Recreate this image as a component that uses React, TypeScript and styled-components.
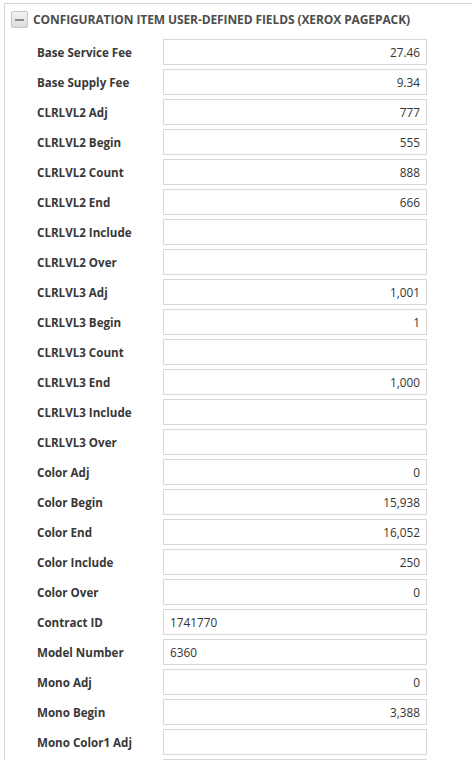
import styled, { createGlobalStyle } from 'styled-components';

const GlobalStyle = createGlobalStyle`
  html, body {
    margin: 0;
    padding: 0;
    background: #ffffff;
    overflow: hidden;
  }
  body {
    font-family: "Open Sans", "Liberation Sans", sans-serif;
  }
`

const Page = styled.div`
  width: 472px;
  height: 760px;
  overflow: hidden;
  padding: 3px 0 0 4px;
  box-sizing: border-box;
`

const Panel = styled.section`
  border-top: 1px solid #d6d6d6;
  border-left: 1px solid #d6d6d6;
`

const Header = styled.header`
  display: flex;
  align-items: center;
  gap: 5px;
  height: 31px;
  padding: 0 0 4px 6px;
`

const ToggleBox = styled.div`
  box-sizing: border-box;
  width: 17px;
  height: 17px;
  border: 1px solid #c4c4c4;
  border-radius: 2px;
  background: linear-gradient(#f4f4f4, #dcdcdc);
  display: flex;
  align-items: center;
  justify-content: center;
`

const Minus = styled.span`
  width: 9px;
  height: 2px;
  background: #8a8a8a;
`

const Title = styled.h3`
  margin: 0;
  font-size: 12px;
  font-weight: 700;
  color: #4d4d4d;
  letter-spacing: -0.1px;
  white-space: nowrap;
`

const Fields = styled.div`
  display: grid;
  grid-template-columns: 126px 264px;
  grid-auto-rows: 26px;
  row-gap: 4px;
  padding-left: 32px;
`

const Label = styled.label`
  display: flex;
  align-items: center;
  font-size: 11.6px;
  font-weight: 700;
  color: #383838;
  white-space: nowrap;
`

const Input = styled.input<{ $align: 'left' | 'right' }>`
  box-sizing: border-box;
  width: 100%;
  height: 26px;
  margin: 0;
  border: 1px solid #d8d8d8;
  padding: 0 6px;
  font-family: "Open Sans", "Liberation Sans", sans-serif;
  font-size: 11.8px;
  color: #333333;
  background: #ffffff;
  text-align: ${(props) => props.$align};
  outline: none;
`

const rows: [string, string, ('left' | 'right')?][] = [
  ['Base Service Fee', '27.46'],
  ['Base Supply Fee', '9.34'],
  ['CLRLVL2 Adj', '777'],
  ['CLRLVL2 Begin', '555'],
  ['CLRLVL2 Count', '888'],
  ['CLRLVL2 End', '666'],
  ['CLRLVL2 Include', ''],
  ['CLRLVL2 Over', ''],
  ['CLRLVL3 Adj', '1,001'],
  ['CLRLVL3 Begin', '1'],
  ['CLRLVL3 Count', ''],
  ['CLRLVL3 End', '1,000'],
  ['CLRLVL3 Include', ''],
  ['CLRLVL3 Over', ''],
  ['Color Adj', '0'],
  ['Color Begin', '15,938'],
  ['Color End', '16,052'],
  ['Color Include', '250'],
  ['Color Over', '0'],
  ['Contract ID', '1741770', 'left'],
  ['Model Number', '6360', 'left'],
  ['Mono Adj', '0'],
  ['Mono Begin', '3,388'],
  ['Mono Color1 Adj', ''],
  // next row only shows its input's top edge at the bottom of the window
  ['', ''],
]

function App() {
  return (
    <Page>
      <GlobalStyle />
      <Panel>
        <Header>
          <ToggleBox><Minus /></ToggleBox>
          <Title>CONFIGURATION ITEM USER-DEFINED FIELDS (XEROX PAGEPACK)</Title>
        </Header>
        <Fields>
          {rows.map(([label, value, align], i) => [
            <Label key={'l' + i}>{label}</Label>,
            <Input key={'i' + i} $align={align ?? 'right'} defaultValue={value} readOnly />,
          ])}
        </Fields>
      </Panel>
    </Page>
  )
}

export default App;
